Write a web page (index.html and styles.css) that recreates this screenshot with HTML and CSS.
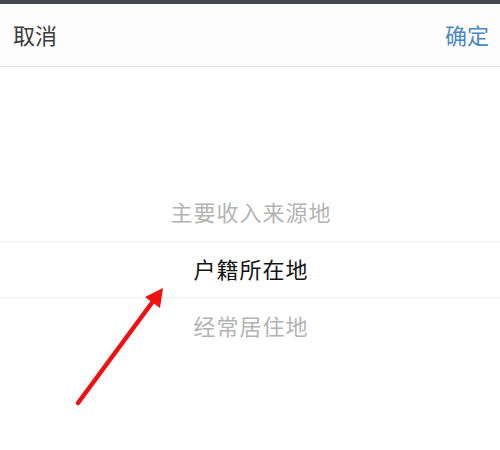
FILE: index.html
```html
<!DOCTYPE html>
<html lang="zh">
<head>
<meta charset="utf-8">
<link rel="stylesheet" href="styles.css">
</head>
<body>
<div class="topbar"></div>
<div class="header">
  <span class="cancel">取消</span>
  <span class="confirm">确定</span>
</div>
<div class="picker">
  <div class="row dim">主要收入来源地</div>
  <div class="row selected">户籍所在地</div>
  <div class="row dim">经常居住地</div>
</div>
<svg class="arrow" width="500" height="450" viewBox="0 0 500 450">
  <line x1="78" y1="403" x2="154" y2="300" stroke="#f01010" stroke-width="4.5" stroke-linecap="round"/>
  <polygon points="163,288 160,308 145,297" fill="#f01010"/>
</svg>
</body>
</html>
```

FILE: styles.css
```css
html, body {
  margin: 0;
  padding: 0;
  background: #ffffff;
  width: 500px;
  height: 450px;
  overflow: hidden;
  font-family: "Noto Sans CJK SC", "Noto Sans", sans-serif;
}
.topbar {
  height: 4px;
  background: #474750;
}
.header {
  height: 63px;
  display: flex;
  align-items: center;
  justify-content: space-between;
  padding: 0 11px 3px 13px;
  box-sizing: border-box;
  border-bottom: 1px solid #e2e2e2;
  background: #fdfdfd;
  font-size: 22px;
}
.cancel {
  color: #3c3c3c;
}
.confirm {
  color: #4a87c6;
}
.picker {
  padding-top: 117px;
}
.row {
  height: 57px;
  display: flex;
  align-items: center;
  justify-content: center;
  font-size: 22px;
  letter-spacing: 1px;
  padding: 0 0 3px 2px;
  box-sizing: border-box;
}
.dim {
  color: #b3b3b3;
}
.selected {
  color: #141414;
  border-top: 1px solid #ededed;
  border-bottom: 1px solid #ededed;
}
.arrow {
  position: absolute;
  left: 0;
  top: 0;
}
```
